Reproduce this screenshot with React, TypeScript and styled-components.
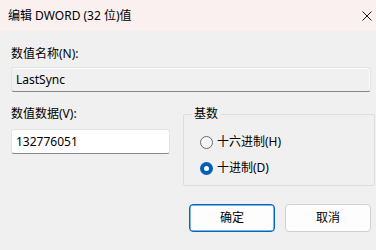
import React from "react";
import styled, { createGlobalStyle } from "styled-components";

const Global = createGlobalStyle`
  html, body { margin: 0; padding: 0; background: #f0f0f0; }
  body {
    font-family: "Segoe UI", "Noto Sans", "Noto Sans CJK SC", sans-serif;
    font-size: 12px;
    color: #000;
    overflow: hidden;
  }
  * { box-sizing: border-box; }
`;

const Window = styled.div`
  width: 376px;
  height: 250px;
  display: flex;
  flex-direction: column;
  background: #f0f0f0;
`;

const TitleBar = styled.div`
  height: 31px;
  flex: none;
  display: flex;
  align-items: center;
  justify-content: space-between;
  padding: 0 0 0 8px;
  background: #faf0f0;
`;

const Title = styled.span`
  font-size: 12px;
  line-height: 16px;
  margin-top: 1px;
`;

const CloseButton = styled.div`
  width: 14px;
  height: 14px;
  display: flex;
  align-items: center;
  justify-content: center;
  margin-right: 2px;
`;

const Body = styled.div`
  display: flex;
  flex-direction: column;
  padding: 15px 5px 0 11px;
`;

const Label = styled.label`
  display: block;
  line-height: 16px;
  height: 16px;
`;

const TextBox = styled.div<{ $readOnly?: boolean }>`
  height: 25px;
  display: flex;
  align-items: center;
  padding: 0 4px;
  border: 1px solid #e3e3e3;
  border-bottom-color: ${(p) => (p.$readOnly ? "#868686" : "#8a8a8a")};
  border-radius: 3px;
  background: ${(p) => (p.$readOnly ? "#f0f0f0" : "#ffffff")};
  box-shadow: ${(p) => (p.$readOnly ? "inset 0 1px 0 #fbfbfb, inset -1px 0 0 #fbfbfb" : "none")};
  font-size: 12px;
  line-height: 16px;
`;

const NameBox = styled(TextBox)`
  margin-top: 5px;
`;

const Section = styled.div`
  display: grid;
  grid-template-columns: 159px 1fr;
  column-gap: 13px;
  margin-top: 14px;
  align-items: start;
`;

const Column = styled.div`
  display: flex;
  flex-direction: column;
  gap: 7px;
`;

const Group = styled.fieldset`
  margin: 0 -4px 0 0;
  padding: 0 0 7px 8px;
  border: 1px solid #dddddd;
  border-radius: 2px;
  min-width: 0;
`;

const Legend = styled.legend`
  padding: 0 2px;
  line-height: 16px;
  font-size: 12px;
`;

const RadioList = styled.div`
  display: flex;
  flex-direction: column;
  gap: 6px;
  padding: 10px 0 0 8px;
`;

const RadioRow = styled.div`
  display: flex;
  align-items: center;
  height: 20px;
  gap: 4px;
`;

const RadioCircle = styled.span<{ $checked?: boolean }>`
  width: 13px;
  height: 13px;
  border-radius: 50%;
  flex: none;
  display: flex;
  align-items: center;
  justify-content: center;
  border: ${(p) => (p.$checked ? "none" : "1px solid #6a6a6a")};
  background: ${(p) => (p.$checked ? "#005fb8" : "#f6f6f6")};
  &::after {
    content: "";
    display: ${(p) => (p.$checked ? "block" : "none")};
    width: 5px;
    height: 5px;
    border-radius: 50%;
    background: #ffffff;
  }
`;

const RadioText = styled.span`
  line-height: 16px;
`;

const Buttons = styled.div`
  display: flex;
  justify-content: flex-end;
  gap: 10px;
  margin-top: 18px;
`;

const Button = styled.button<{ $primary?: boolean }>`
  width: 86px;
  height: 28px;
  border-radius: 4px;
  background: #fdfdfd;
  border: 1px solid ${(p) => (p.$primary ? "#0067c0" : "#d0d0d0")};
  box-shadow: ${(p) => (p.$primary ? "inset 0 0 0 0.5px #0067c0" : "none")};
  font-family: inherit;
  font-size: 12px;
  color: #000;
  padding: 0;
  line-height: 16px;
`;

function CloseIcon() {
  return (
    <svg width="10" height="10" viewBox="0 0 10 10" fill="none">
      <path d="M0.5 0.5 L9.5 9.5 M9.5 0.5 L0.5 9.5" stroke="#1a1a1a" strokeWidth="1" />
    </svg>
  );
}

export default function App() {
  return (
    <>
      <Global />
      <Window>
        <TitleBar>
          <Title>编辑 DWORD (32 位)值</Title>
          <CloseButton>
            <CloseIcon />
          </CloseButton>
        </TitleBar>
        <Body>
          <Label>数值名称(N):</Label>
          <NameBox $readOnly>LastSync</NameBox>
          <Section>
            <Column>
              <Label>数值数据(V):</Label>
              <TextBox>132776051</TextBox>
            </Column>
            <Group>
              <Legend>基数</Legend>
              <RadioList>
                <RadioRow>
                  <RadioCircle />
                  <RadioText>十六进制(H)</RadioText>
                </RadioRow>
                <RadioRow>
                  <RadioCircle $checked />
                  <RadioText>十进制(D)</RadioText>
                </RadioRow>
              </RadioList>
            </Group>
          </Section>
          <Buttons>
            <Button $primary>确定</Button>
            <Button>取消</Button>
          </Buttons>
        </Body>
      </Window>
    </>
  );
}
